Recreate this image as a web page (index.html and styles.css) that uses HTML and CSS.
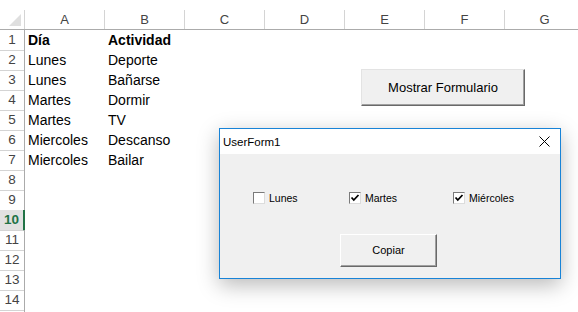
FILE: index.html
```html
<!DOCTYPE html>
<html lang="es">
<head>
    <meta charset="UTF-8">
    <title>Hoja1</title>
    <link rel="stylesheet" href="styles.css">
</head>
<body>
    <div class="sheet">
        <div class="head-row">
            <div class="corner"><span class="tri"></span></div>
            <div class="col-head">A</div>
            <div class="col-head">B</div>
            <div class="col-head">C</div>
            <div class="col-head">D</div>
            <div class="col-head">E</div>
            <div class="col-head">F</div>
            <div class="col-head">G</div>
        </div>
        <div class="row"><div class="row-head">1</div><div class="cell bold">Día</div><div class="cell bold">Actividad</div></div>
        <div class="row"><div class="row-head">2</div><div class="cell">Lunes</div><div class="cell">Deporte</div></div>
        <div class="row"><div class="row-head">3</div><div class="cell">Lunes</div><div class="cell">Bañarse</div></div>
        <div class="row"><div class="row-head">4</div><div class="cell">Martes</div><div class="cell">Dormir</div></div>
        <div class="row"><div class="row-head">5</div><div class="cell">Martes</div><div class="cell">TV</div></div>
        <div class="row"><div class="row-head">6</div><div class="cell">Miercoles</div><div class="cell">Descanso</div></div>
        <div class="row"><div class="row-head">7</div><div class="cell">Miercoles</div><div class="cell">Bailar</div></div>
        <div class="row"><div class="row-head">8</div></div>
        <div class="row"><div class="row-head">9</div></div>
        <div class="row"><div class="row-head active">10</div></div>
        <div class="row"><div class="row-head">11</div></div>
        <div class="row"><div class="row-head">12</div></div>
        <div class="row"><div class="row-head">13</div></div>
        <div class="row"><div class="row-head">14</div></div>
        <div class="row"><div class="row-head"></div></div>
    </div>

    <div class="sheet-btn">Mostrar Formulario</div>

    <div class="userform">
        <div class="uf-title">
            <span>UserForm1</span>
            <svg class="uf-close" width="11" height="11" viewBox="0 0 11 11">
                <path d="M0.5 0.5 L10.5 10.5 M10.5 0.5 L0.5 10.5" stroke="#000" stroke-width="1" fill="none"/>
            </svg>
        </div>
        <div class="uf-body">
            <div class="checks">
                <label class="chk chk-lunes"><span class="box"></span>Lunes</label>
                <label class="chk chk-martes"><span class="box on"><svg width="10" height="10" viewBox="0 0 10 10"><path d="M1.5 4.5 L3.8 7 L8.5 2" stroke="#000" stroke-width="1.8" fill="none"/></svg></span>Martes</label>
                <label class="chk chk-mier"><span class="box on"><svg width="10" height="10" viewBox="0 0 10 10"><path d="M1.5 4.5 L3.8 7 L8.5 2" stroke="#000" stroke-width="1.8" fill="none"/></svg></span>Miércoles</label>
            </div>
            <div class="uf-btn">Copiar</div>
        </div>
    </div>
</body>
</html>
```

FILE: styles.css
```css
* {
    padding: 0px;
    margin: 0px;
    box-sizing: border-box;
}
body {
    width: 578px;
    height: 312px;
    overflow: hidden;
    background-color: #fff;
    font-family: "Liberation Sans", Arial, sans-serif;
    position: relative;
}
.sheet {
    padding-top: 10px;
}
.head-row,
.row {
    display: grid;
    grid-template-columns: 25px repeat(7, 80px);
    height: 20px;
}
.head-row {
    border-bottom: 1px solid #ababab;
}
.corner {
    position: relative;
    border-right: 1px solid #d4d4d4;
}
.corner .tri {
    position: absolute;
    right: 3px;
    bottom: 3px;
    width: 0px;
    height: 0px;
    border-left: 12px solid transparent;
    border-bottom: 12px solid #dfdfdf;
}
.col-head {
    border-right: 1px solid #d4d4d4;
    text-align: center;
    line-height: 19px;
    font-size: 13px;
    color: #444;
}
.row-head {
    border-right: 1px solid #ababab;
    border-bottom: 1px solid #d4d4d4;
    text-align: center;
    line-height: 20px;
    font-size: 13.5px;
    color: #444;
}
.row-head.active {
    background-color: #e1e1e1;
    border-right: 2px solid #217346;
    color: #217346;
    font-weight: bold;
}
.cell {
    padding-left: 3px;
    line-height: 20px;
    font-size: 14px;
    color: #000;
    white-space: nowrap;
}
.cell.bold {
    font-weight: bold;
}

/* boton de la hoja */
.sheet-btn {
    position: absolute;
    left: 361px;
    top: 69px;
    width: 164px;
    height: 37px;
    background-color: #f0f0f0;
    border-top: 1px solid #e3e3e3;
    border-left: 1px solid #e3e3e3;
    border-right: 1px solid #696969;
    border-bottom: 1px solid #696969;
    box-shadow: inset -1px -1px 0px #a0a0a0;
    text-align: center;
    line-height: 35px;
    font-size: 13px;
    color: #000;
}

/* userform */
.userform {
    position: absolute;
    left: 219px;
    top: 128px;
    width: 342px;
    height: 151px;
    border: 1px solid #1883d7;
    background-color: #f0f0f0;
    box-shadow: 0px 6px 20px rgba(0, 0, 0, 0.28);
    display: flex;
    flex-direction: column;
}
.uf-title {
    height: 25px;
    background-color: #fff;
    display: flex;
    align-items: center;
    justify-content: space-between;
    padding-left: 3px;
    padding-right: 10px;
    font-size: 11.5px;
    color: #000;
}
.uf-body {
    flex: 1;
    position: relative;
}
.checks {
    display: flex;
    padding-top: 37px;
    padding-left: 33px;
    height: 50px;
    font-size: 10.5px;
    color: #000;
}
.chk {
    display: flex;
    align-items: center;
    gap: 4px;
    height: 13px;
    white-space: nowrap;
}
.chk-lunes {
    width: 96px;
}
.chk-martes {
    width: 104px;
}
.box {
    width: 12px;
    height: 12px;
    background-color: #fff;
    border-top: 1px solid #7a7a7a;
    border-left: 1px solid #7a7a7a;
    border-right: 1px solid #dcdcdc;
    border-bottom: 1px solid #dcdcdc;
    display: flex;
    align-items: center;
    justify-content: center;
}
.uf-btn {
    margin: 30px 0px 0px 120px;
    width: 97px;
    height: 33px;
    background-color: #f0f0f0;
    border-top: 1px solid #fff;
    border-left: 1px solid #fff;
    border-right: 1px solid #696969;
    border-bottom: 1px solid #696969;
    box-shadow: inset -1px -1px 0px #a0a0a0;
    text-align: center;
    line-height: 31px;
    font-size: 11px;
    color: #000;
}
```
